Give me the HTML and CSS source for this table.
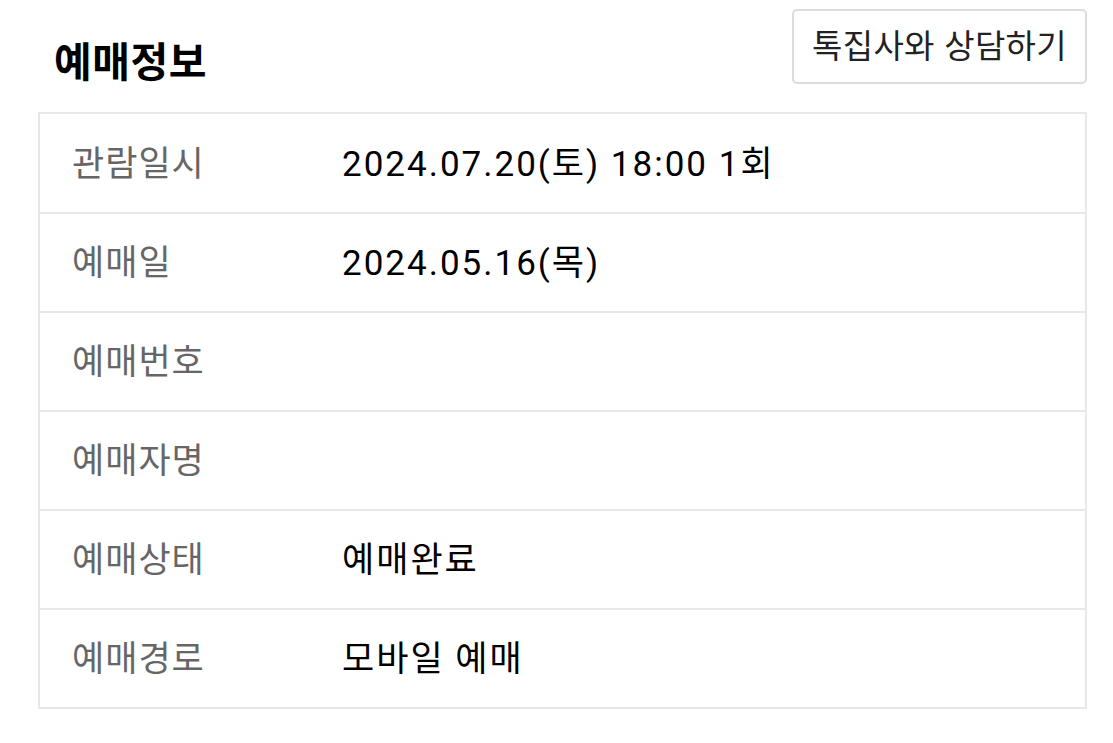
FILE: index.html
```html
<!DOCTYPE html>
<html lang="ko">
<head>
<meta charset="utf-8">
<link rel="stylesheet" href="styles.css">
</head>
<body>
<div class="page">
  <div class="header">
    <h2 class="title">예매정보</h2>
    <button class="consult">톡집사와 상담하기</button>
  </div>
  <div class="table">
    <div class="row"><div class="label">관람일시</div><div class="value">2024.07.20(토) 18:00 1회</div></div>
    <div class="row"><div class="label">예매일</div><div class="value">2024.05.16(목)</div></div>
    <div class="row"><div class="label">예매번호</div><div class="value"></div></div>
    <div class="row"><div class="label">예매자명</div><div class="value"></div></div>
    <div class="row"><div class="label">예매상태</div><div class="value">예매완료</div></div>
    <div class="row"><div class="label">예매경로</div><div class="value">모바일 예매</div></div>
  </div>
</div>
</body>
</html>
```
FILE: styles.css
```css
html, body {
  margin: 0;
  padding: 0;
  background: #ffffff;
}
body {
  font-family: Roboto, "Noto Sans CJK KR", sans-serif;
  color: #000;
}
.page {
  padding: 0 26px 0 38px;
}
.header {
  display: flex;
  justify-content: space-between;
  align-items: flex-start;
  height: 112px;
}
.title {
  margin: 0;
  padding: 33px 0 0 16px;
  font-family: "Noto Sans CJK KR", sans-serif;
  font-size: 41px;
  font-weight: 700;
  line-height: 52px;
  letter-spacing: 0.5px;
}
.consult {
  margin-top: 9px;
  height: 75px;
  width: 295px;
  padding: 0 0 4px 0;
  background: #fff;
  border: 2px solid #dcdcdc;
  border-radius: 5px;
  font-family: "Noto Sans CJK KR", sans-serif;
  font-size: 33px;
  letter-spacing: 0.3px;
  color: #222;
  line-height: 1;
}
.table {
  border: 2px solid #e8e8e8;
}
.row {
  display: flex;
  align-items: center;
  box-sizing: border-box;
  height: 99px;
  padding-bottom: 6px;
  border-top: 2px solid #e8e8e8;
}
.row:first-child {
  border-top: none;
  height: 98px;
}
.label {
  width: 270px;
  padding-left: 32px;
  font-family: "Noto Sans CJK KR", sans-serif;
  font-size: 35px;
  letter-spacing: 1px;
  color: #666;
}
.value {
  font-size: 35px;
  letter-spacing: 2px;
  color: #000;
}
```
